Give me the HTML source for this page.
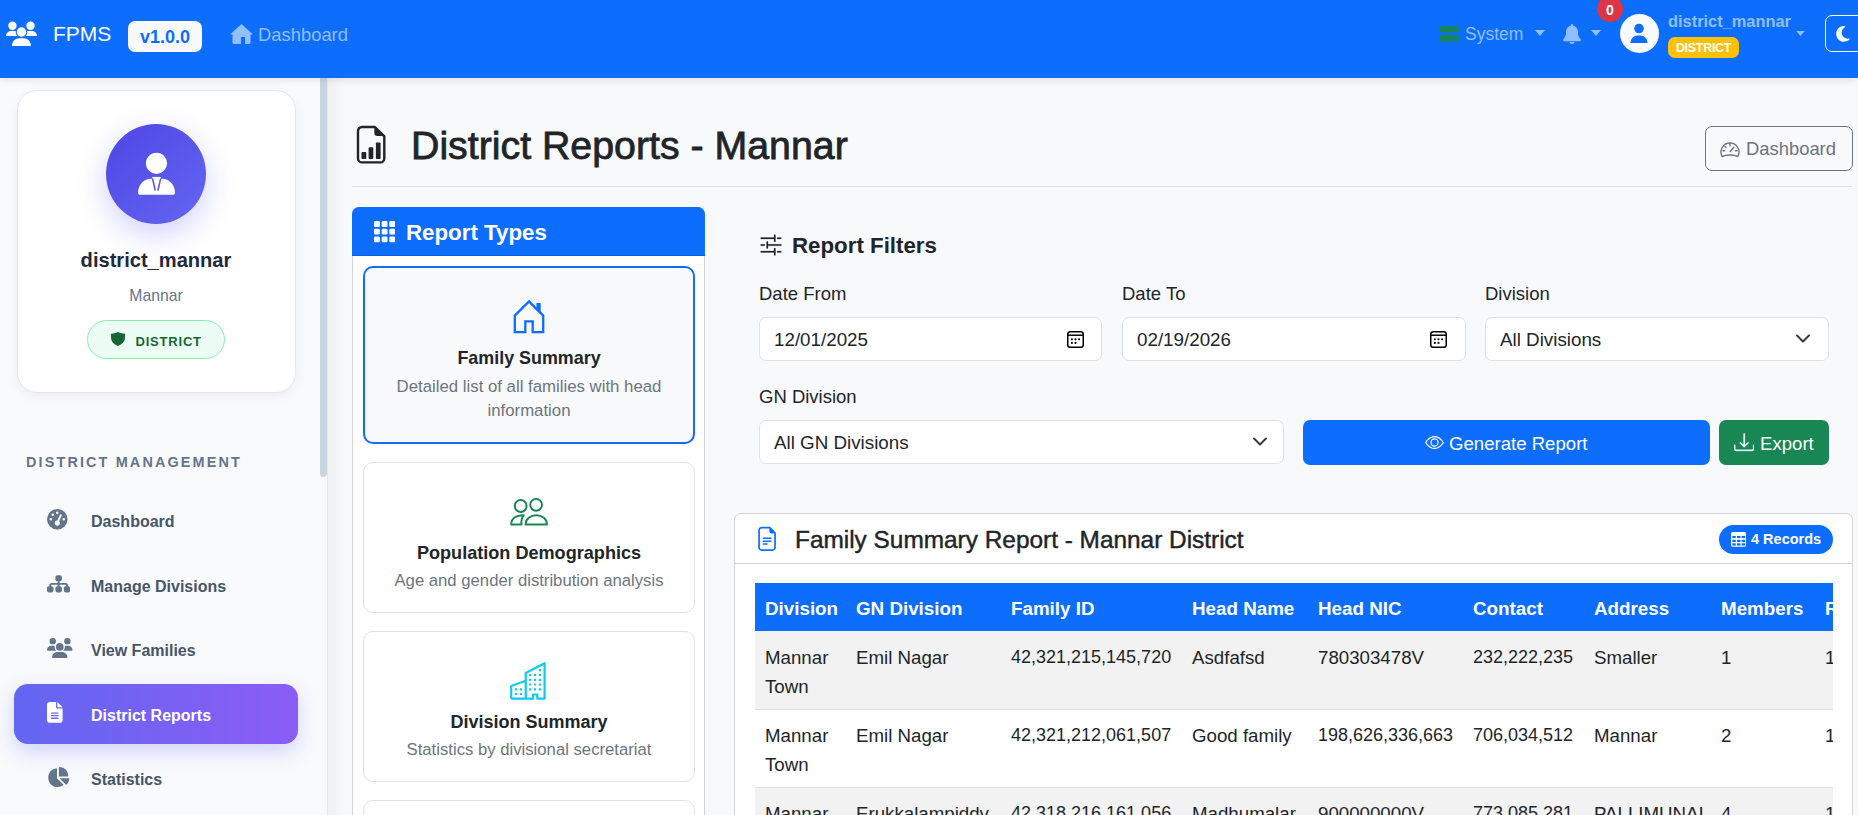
<!DOCTYPE html>
<html><head><meta charset="utf-8">
<style>
*{box-sizing:border-box;margin:0;padding:0}
html,body{width:1858px;height:815px;overflow:hidden}
body{font-family:"Liberation Sans",sans-serif;background:#f8f9fa;position:relative;color:#212529}
.a{position:absolute;white-space:nowrap}
svg{display:block}
/* navbar */
#nav{position:absolute;left:0;top:0;width:1858px;height:78px;background:#0d6efd;z-index:5;box-shadow:0 2px 8px rgba(0,0,0,.1)}
/* sidebar */
#side{position:absolute;left:0;top:78px;width:328px;height:737px;background:#f8fafc;border-right:1px solid #e2e8f0}
#main{position:absolute;left:328px;top:78px;width:1530px;height:737px;background:#f8f9fa}
.card{position:absolute;background:#fff;border:1px solid #e2e8f0}
.lbl{font-size:18.5px;color:#212529;line-height:22px}
.inp{height:44px;background:#fff;border:1px solid #dee2e6;border-radius:7px}
.itx{font-size:18.8px;color:#212529;line-height:22px}
#tb{border-collapse:collapse;table-layout:fixed;width:1110px}
#tb th{background:#0d6efd;color:#fff;font-weight:700;font-size:18.8px;text-align:left;padding:3px 10px 0;height:48px;line-height:22px;white-space:nowrap;overflow:hidden}
#tb td{font-size:18.7px;color:#212529;padding:10.5px 10px 8.5px;line-height:29px;vertical-align:top;border-top:1px solid #dee2e6;white-space:nowrap;overflow:hidden}
#tb tr.st td{background:#f2f2f2}
#tb td.n{font-size:18px}
#tb tbody tr:first-child td{border-top:0;padding-top:12px;padding-bottom:8px}
</style></head><body>

<div id="nav">
  <!-- users icon -->
  <svg class="a" style="left:0;top:15px" width="45" height="35" viewBox="0 15 45 35" fill="#fff">
    <circle cx="12.45" cy="25.7" r="4.2"/><circle cx="30.5" cy="25.7" r="4.2"/>
    <path d="M6 36C6 33 8.3 30.9 11 30.9H20V36z"/><path d="M37 36C37 33 34.7 30.9 32 30.9H23V36z"/>
    <circle cx="21.5" cy="32" r="5.3" stroke="#0d6efd" stroke-width="1.1"/>
    <path d="M12 45.9C12 41.2 15.3 38.2 19.3 38.2H23.6C27.6 38.2 30.9 41.2 30.9 45.9z"/>
  </svg>
  <div class="a" style="left:53px;top:20.5px;font-size:21px;color:#fff;line-height:26px">FPMS</div>
  <div class="a" style="left:128px;top:21px;width:74px;height:31px;background:#f8f9fa;border-radius:7px"></div>
  <div class="a" style="left:140px;top:25px;font-size:18px;font-weight:700;color:#0d6efd;line-height:24px">v1.0.0</div>
  <!-- home -->
  <svg class="a" style="left:230px;top:24px" width="23" height="20" viewBox="0 0 23 20" fill="#92befe">
    <path d="M11.5 0L23 10.5h-2.5V18.5a1.5 1.5 0 0 1-1.5 1.5h-4V13h-4v7H4a1.5 1.5 0 0 1-1.5-1.5V10.5H0z"/>
  </svg>
  <div class="a" style="left:258px;top:23px;font-size:18.4px;color:#92befe;line-height:24px">Dashboard</div>

  <!-- right side -->
  <svg class="a" style="left:1440.2px;top:26px" width="19" height="16" viewBox="0 0 19 16">
    <rect x="0" y="0" width="18.6" height="6.2" rx="1" fill="#198754"/>
    <rect x="0" y="9.1" width="18.6" height="6.5" rx="1" fill="#198754"/>
    <circle cx="12.6" cy="3.1" r=".8" fill="#0d6efd"/><circle cx="15.2" cy="3.1" r=".8" fill="#0d6efd"/>
    <circle cx="12.6" cy="12.5" r=".8" fill="#0d6efd"/><circle cx="15.2" cy="12.5" r=".8" fill="#0d6efd"/>
  </svg>
  <div class="a" style="left:1465px;top:22px;font-size:17.5px;color:#92befe;line-height:24px">System</div>
  <svg class="a" style="left:1535px;top:30px" width="10" height="6" viewBox="0 0 10 6" fill="#92befe"><path d="M0 0h10L5 6z"/></svg>
  <!-- bell -->
  <svg class="a" style="left:1563px;top:24px" width="18" height="20" viewBox="0 0 18 20" fill="#92befe">
    <path d="M9 0c.8 0 1.3.6 1.3 1.3v.5C13.3 2.4 15 5 15 8v1.3c0 2 .7 3.8 2 5.2l.5.6c.4.5.5 1 .2 1.5-.2.4-.6.7-1.1.7H1.4c-.5 0-.9-.3-1.1-.7-.2-.5-.2-1 .2-1.5l.5-.6C2.3 13.1 3 11.3 3 9.3V8c0-3 1.7-5.6 4.7-6.2v-.5C7.7.6 8.2 0 9 0z"/>
    <path d="M6.5 18h5c0 1.3-1.1 2-2.5 2s-2.5-.7-2.5-2z"/>
  </svg>
  <svg class="a" style="left:1591px;top:30px" width="10" height="6" viewBox="0 0 10 6" fill="#92befe"><path d="M0 0h10L5 6z"/></svg>
  <div class="a" style="left:1597px;top:-4px;width:26px;height:26px;border-radius:50%;background:#dc3545"></div>
  <div class="a" style="left:1597px;top:2px;width:26px;text-align:center;font-size:14px;font-weight:700;color:#fff;line-height:16px">0</div>
  <!-- avatar -->
  <div class="a" style="left:1620px;top:14px;width:39px;height:39px;border-radius:50%;background:#f8f9fa"></div>
  <svg class="a" style="left:1629px;top:23px" width="20" height="20" viewBox="0 0 20 20" fill="#0d6efd">
    <circle cx="10" cy="5.5" r="4.8"/><path d="M1.5 20c0-4.5 3.5-7.5 7-7.5h3c3.5 0 7 3 7 7.5z"/>
  </svg>
  <div class="a" style="left:1668px;top:11px;font-size:16.4px;font-weight:700;color:#92befe;line-height:20px">district_mannar</div>
  <div class="a" style="left:1668px;top:37px;width:71px;height:21px;background:#ffc107;border-radius:7px"></div>
  <div class="a" style="left:1668px;top:41px;width:71px;text-align:center;font-size:12.5px;font-weight:700;color:#fff;line-height:15px;letter-spacing:-0.3px">DISTRICT</div>
  <svg class="a" style="left:1796px;top:31px" width="9" height="5" viewBox="0 0 10 6" fill="#92befe"><path d="M0 0h10L5 6z"/></svg>
  <div class="a" style="left:1825px;top:15px;width:50px;height:37px;border:1px solid #fff;border-radius:7px"></div>
  <svg class="a" style="left:1836px;top:24.7px" width="13.7" height="17.8" viewBox="0 0 384 512"><path fill="#f8f9fa" d="M223.5 32C100 32 0 132.3 0 256S100 480 223.5 480c60.6 0 115.5-24.2 155.8-63.4c5-4.9 6.3-12.5 3.1-18.7s-10.1-9.7-17-8.5c-9.8 1.7-19.8 2.6-30.1 2.6c-96.900 0-175.5-78.8-175.5-176c0-65.8 36-123.1 89.3-153.3c6.1-3.5 9.2-10.5 7.7-17.3s-7.3-11.9-14.3-12.5c-6.3-.5-12.6-.8-19-.8z"/></svg>
</div>

<div id="side">
  <div class="a" style="left:16.5px;top:12px;width:279px;height:303px;background:#fff;border:1px solid #e2e8f0;border-radius:20px;box-shadow:0 4px 12px rgba(15,23,42,.05)"></div>
  <div class="a" style="left:106px;top:46px;width:100px;height:100px;border-radius:50%;background:linear-gradient(135deg,#4f46e5,#6366f1);box-shadow:0 10px 30px rgba(99,102,241,.3)"></div>
  <svg class="a" style="left:137px;top:74px" width="40" height="44" viewBox="0 0 40 44">
    <circle cx="19.5" cy="11.3" r="10.6" fill="#fff"/>
    <path d="M1 41C1 32.5 7 26.7 14 26.7H25C32 26.7 38 32.5 38 41Q38 42.7 36.3 42.7H2.7Q1 42.7 1 41Z" fill="#fff"/>
    <path d="M15.3 24.9h8.6v2.2h-8.6z" fill="#fff"/>
    <path d="M15.5 26.5L18.3 38.5M23.7 26.5L20.9 38.5" stroke="#5953e8" stroke-width="1.5"/>
  </svg>
  <div class="a" style="left:0;top:170px;width:312px;text-align:center;font-size:20.1px;font-weight:700;color:#1e293b;line-height:24px">district_mannar</div>
  <div class="a" style="left:0;top:208px;width:312px;text-align:center;font-size:15.75px;color:#64748b;line-height:20px">Mannar</div>
  <div class="a" style="left:87px;top:242px;width:138px;height:39px;border-radius:20px;background:#ecfdf5;border:1px solid #86efac"></div>
  <svg class="a" style="left:110.5px;top:254px" width="14" height="14" viewBox="0 0 14 14" fill="#166534">
    <path d="M7 0C9.5 1 11.5 1.6 14 1.8V5.5C14 9.5 11 12.5 7 14 3 12.5 0 9.5 0 5.5V1.8C2.5 1.6 4.5 1 7 0z"/>
  </svg>
  <div class="a" style="left:135.5px;top:256px;font-size:13px;font-weight:700;color:#166534;line-height:16px;letter-spacing:0.8px">DISTRICT</div>

  <div class="a" style="left:26px;top:376px;font-size:14.4px;font-weight:700;color:#64748b;line-height:16px;letter-spacing:2.15px">DISTRICT MANAGEMENT</div>

  <div class="a" style="left:14px;top:606px;width:284px;height:60px;border-radius:14px;background:linear-gradient(90deg,#6366f1,#8b5cf6);box-shadow:0 8px 20px rgba(99,102,241,.25)"></div>

  <!-- nav icons -->
  <svg class="a" style="left:47.2px;top:431px" width="20.6" height="20.6" viewBox="0 0 512 512"><path fill="#64748b" fill-rule="evenodd" d="M0 256a256 256 0 1 1 512 0A256 256 0 1 1 0 256zM288 96a32 32 0 1 0 -64 0 32 32 0 1 0 64 0zM256 416c35.3 0 64-28.7 64-64c0-17.4-6.9-33.1-18.1-44.6L366 161.7c5.3-12.1-.2-26.3-12.3-31.6s-26.3 .2-31.6 12.3L257.9 288c-.6 0-1.3 0-1.9 0c-35.3 0-64 28.7-64 64s28.7 64 64 64zM176 144a32 32 0 1 0 -64 0 32 32 0 1 0 64 0zM96 288a32 32 0 1 0 0-64 32 32 0 1 0 0 64zm352-32a32 32 0 1 0 -64 0 32 32 0 1 0 64 0z"/></svg>
  <div class="a" style="left:91px;top:434px;font-size:16px;font-weight:700;color:#475569;line-height:20px">Dashboard</div>

  <svg class="a" style="left:46.9px;top:496px" width="23.3" height="19.66" viewBox="0 0 576 512" preserveAspectRatio="none"><path fill="#64748b" d="M208 80c0-26.5 21.5-48 48-48h64c26.5 0 48 21.5 48 48v64c0 26.5-21.5 48-48 48h-8v40H464c30.9 0 56 25.1 56 56v32h8c26.5 0 48 21.5 48 48v64c0 26.5-21.5 48-48 48H464c-26.5 0-48-21.5-48-48V368c0-26.5 21.5-48 48-48h8V288c0-4.4-3.6-8-8-8H312v40h8c26.5 0 48 21.5 48 48v64c0 26.5-21.5 48-48 48H256c-26.5 0-48-21.5-48-48V368c0-26.5 21.5-48 48-48h8V280H112c-4.4 0-8 3.6-8 8v32h8c26.5 0 48 21.5 48 48v64c0 26.5-21.5 48-48 48H48c-26.5 0-48-21.5-48-48V368c0-26.5 21.5-48 48-48h8V288c0-30.9 25.1-56 56-56H264V192h-8c-26.5 0-48-21.5-48-48V80z"/></svg>
  <div class="a" style="left:91px;top:499px;font-size:16px;font-weight:700;color:#475569;line-height:20px">Manage Divisions</div>

  <svg class="a" style="left:47.1px;top:560.1px" width="25.5" height="20.4" viewBox="0 0 640 512"><path fill="#64748b" d="M144 0a80 80 0 1 1 0 160A80 80 0 1 1 144 0zM512 0a80 80 0 1 1 0 160A80 80 0 1 1 512 0zM0 298.7C0 239.8 47.8 192 106.7 192h42.7c15.9 0 31 3.5 44.6 9.7c-1.3 7.2-1.9 14.700-1.9 22.3c0 38.2 16.8 72.5 43.3 96c-.2 0-.4 0-.7 0H21.3C9.6 320 0 310.4 0 298.7zM405.3 320c-.2 0-.4 0-.7 0c26.6-23.5 43.3-57.8 43.3-96c0-7.6-.7-15-1.9-22.3c13.6-6.3 28.7-9.700 44.6-9.7h42.7C592.2 192 640 239.8 640 298.7c0 11.8-9.6 21.3-21.3 21.3H405.3zM224 224a96 96 0 1 1 192 0 96 96 0 1 1 -192 0zM128 485.3C128 411.7 187.7 352 261.3 352H378.7C452.3 352 512 411.7 512 485.300c0 14.7-11.9 26.7-26.7 26.7H154.7c-14.7 0-26.7-11.9-26.7-26.7z"/></svg>
  <div class="a" style="left:91px;top:563px;font-size:16px;font-weight:700;color:#475569;line-height:20px">View Families</div>

  <svg class="a" style="left:47.1px;top:623.9px" width="15.6" height="20.8" viewBox="0 0 384 512"><path fill="#fff" fill-rule="evenodd" d="M64 0C28.7 0 0 28.7 0 64V448c0 35.3 28.7 64 64 64H320c35.3 0 64-28.7 64-64V160H256c-17.7 0-32-14.300-32-32V0H64zM256 0V128H384L256 0zM112 256H272c8.8 0 16 7.2 16 16s-7.2 16-16 16H112c-8.8 0-16-7.2-16-16s7.2-16 16-16zm0 64H272c8.8 0 16 7.2 16 16s-7.2 16-16 16H112c-8.8 0-16-7.2-16-16s7.2-16 16-16zm0 64H272c8.8 0 16 7.2 16 16s-7.2 16-16 16H112c-8.8 0-16-7.2-16-16s7.2-16 16-16z"/></svg>
  <div class="a" style="left:91px;top:628px;font-size:16px;font-weight:700;color:#fff;line-height:20px">District Reports</div>

  <svg class="a" style="left:47.35px;top:689.4px" width="22.5" height="20" viewBox="0 0 576 512"><path fill="#64748b" d="M304 240V16.6c0-9 7-16.6 16-16.6C443.7 0 544 100.3 544 224c0 9-7.600 16-16.6 16H304zM32 272C32 150.7 122.1 50.3 239 34.3c9.2-1.3 17 6.1 17 15.4V288L412.5 444.5c6.7 6.7 6.2 17.7-1.5 23.1C371.8 495.6 323.8 512 272 512C139.5 512 32 404.6 32 272zm526.4 16c9.3 0 16.6 7.8 15.4 17c-7.7 55.9-34.6 105.600-73.9 142.3c-6 5.6-15.4 5.2-21.2-.7L320 288H558.4z"/></svg>
  <div class="a" style="left:91px;top:692px;font-size:16px;font-weight:700;color:#475569;line-height:20px">Statistics</div>

  <div class="a" style="left:320px;top:0;width:7px;height:399px;border-radius:0 0 4px 4px;background:#cbd5e1"></div>
</div>

<div id="main"></div>
<div id="mc">
  <div class="a" style="left:328px;top:78px;width:18px;height:737px;background:linear-gradient(90deg,rgba(0,0,0,.03),rgba(0,0,0,0))"></div>
  <!-- title icon -->
  <svg class="a" style="left:355px;top:125px" width="32" height="40" viewBox="0 0 32 40">
    <path d="M7 2H19.9L29.3 11.4V33.4A4 4 0 0 1 25.3 37.4H7A4 4 0 0 1 3 33.4V6A4 4 0 0 1 7 2Z" fill="none" stroke="#212529" stroke-width="2.4" stroke-linejoin="round"/>
    <path d="M19.3 1V7.9A3 3 0 0 0 22.3 10.9H30.5Z" fill="#212529"/>
    <g fill="#212529"><rect x="6.5" y="27" width="4.8" height="6.9" rx="1"/><rect x="13.6" y="22.3" width="4.7" height="11.6" rx="1"/><rect x="20.9" y="17.5" width="4.7" height="16.4" rx="1"/></g>
  </svg>
  <div class="a" style="left:411px;top:122px;font-size:39.3px;color:#212529;line-height:46px;-webkit-text-stroke:0.8px #212529">District Reports - Mannar</div>
  <div class="a" style="left:352px;top:186px;width:1500px;height:1px;background:#dee2e6"></div>
  <!-- outline dashboard button -->
  <div class="a" style="left:1705px;top:126px;width:148px;height:45px;border:1px solid #6c757d;border-radius:7px"></div>
  <svg class="a" style="left:1720px;top:141px" width="20" height="17" viewBox="0 0 20 17" fill="none" stroke="#6c757d" stroke-width="1.4">
    <path d="M2.2 15.5A9 9 0 1 1 17.8 15.5C16 14.6 13 14 10 14s-6 .6-7.8 1.5z" stroke-linejoin="round"/>
    <path d="M10 3.3v1.6M5 5.5l1 1M3 9.8h1.6M15.4 9.8H17M10.2 10.5l3.6-4.3" stroke-linecap="round"/>
  </svg>
  <div class="a" style="left:1746px;top:138px;font-size:18.4px;color:#6c757d;line-height:22px">Dashboard</div>

  <!-- report types card -->
  <div class="a" style="left:352px;top:207px;width:353px;height:620px;background:#fff;border:1px solid #d3d4d5;border-radius:7px 7px 0 0"></div>
  <div class="a" style="left:352px;top:207px;width:353px;height:49px;background:#0d6efd;border-radius:7px 7px 0 0;border-bottom:1px solid #0b5ed7"></div>
  <svg class="a" style="left:374px;top:221.3px" width="21.2" height="21.4" viewBox="0 0 21 21" fill="#fff">
    <rect x="0" y="0" width="5.8" height="5.8" rx="1.3"/><rect x="7.6" y="0" width="5.8" height="5.8" rx="1.3"/><rect x="15.2" y="0" width="5.8" height="5.8" rx="1.3"/>
    <rect x="0" y="7.6" width="5.8" height="5.8" rx="1.3"/><rect x="7.6" y="7.6" width="5.8" height="5.8" rx="1.3"/><rect x="15.2" y="7.6" width="5.8" height="5.8" rx="1.3"/>
    <rect x="0" y="15.2" width="5.8" height="5.8" rx="1.3"/><rect x="7.6" y="15.2" width="5.8" height="5.8" rx="1.3"/><rect x="15.2" y="15.2" width="5.8" height="5.8" rx="1.3"/>
  </svg>
  <div class="a" style="left:406px;top:220px;font-size:22.3px;font-weight:700;color:#fff;line-height:26px">Report Types</div>

  <div class="a" style="left:363px;top:266px;width:332px;height:177.5px;border:2px solid #0d6efd;border-radius:10px;background:#f8f9fa"></div>
  <svg class="a" style="left:512px;top:300px" width="34" height="35" viewBox="0 0 34 35" fill="none" stroke="#0d6efd" stroke-width="2.3">
    <path d="M2.8 32.2V15.6L17 1.4 31.2 15.6V32.2H20.7V21.4H13.3V32.2Z" stroke-linejoin="miter"/>
    <path d="M24.4 3h4.3v9.5l-4.3-4.3z" fill="#0d6efd" stroke="none"/>
  </svg>
  <div class="a" style="left:363px;top:348px;width:332px;text-align:center;font-size:17.9px;font-weight:700;color:#212529;line-height:20px">Family Summary</div>
  <div class="a" style="left:363px;top:374.5px;width:332px;text-align:center;font-size:16.8px;color:#6c757d;line-height:24.6px;white-space:normal">Detailed list of all families with head<br>information</div>

  <div class="a" style="left:363px;top:462px;width:332px;height:151px;border:1px solid #dee2e6;border-radius:10px;background:#fff"></div>
  <svg class="a" style="left:509px;top:497px" width="40" height="30" viewBox="0 0 40 30" fill="none" stroke="#198754" stroke-width="2">
    <circle cx="11.7" cy="9" r="5.9"/><circle cx="27.1" cy="7.8" r="5.9"/>
    <path d="M16.6 27.6C16.6 21.8 21.5 18.3 27.3 18.3S38 21.8 38 27.6Z" stroke-linejoin="round"/>
    <path d="M12.5 27.6H2.2C2.2 22 6.5 18.3 14.8 18.3 12.6 21 12 24 12.5 27.6Z" stroke-linejoin="round"/>
  </svg>
  <div class="a" style="left:363px;top:543px;width:332px;text-align:center;font-size:18.1px;font-weight:700;color:#212529;line-height:20px">Population Demographics</div>
  <div class="a" style="left:363px;top:571px;width:332px;text-align:center;font-size:16.7px;color:#6c757d;line-height:20px">Age and gender distribution analysis</div>

  <div class="a" style="left:363px;top:631px;width:332px;height:151px;border:1px solid #dee2e6;border-radius:10px;background:#fff"></div>
  <svg class="a" style="left:509px;top:661px" width="38" height="40" viewBox="0 0 38 40" fill="none" stroke="#0dcaf0" stroke-width="2.2">
    <path d="M2.2 37.7V25L16.75 19.8M16.75 37.7V12L35.6 2.2V37.7H28.3V33.5H24V37.7H2.2" stroke-linejoin="round"/>
    <g fill="#0dcaf0" stroke="none"><rect x="20.0" y="12.9" width="2.2" height="2.2" rx=".3"/><rect x="20.0" y="17.7" width="2.2" height="2.2" rx=".3"/><rect x="20.0" y="22.4" width="2.2" height="2.2" rx=".3"/><rect x="20.0" y="27.2" width="2.2" height="2.2" rx=".3"/><rect x="24.9" y="12.9" width="2.2" height="2.2" rx=".3"/><rect x="24.9" y="17.7" width="2.2" height="2.2" rx=".3"/><rect x="24.9" y="22.4" width="2.2" height="2.2" rx=".3"/><rect x="24.9" y="27.2" width="2.2" height="2.2" rx=".3"/><rect x="29.8" y="12.9" width="2.2" height="2.2" rx=".3"/><rect x="29.8" y="17.7" width="2.2" height="2.2" rx=".3"/><rect x="29.8" y="22.4" width="2.2" height="2.2" rx=".3"/><rect x="29.8" y="27.2" width="2.2" height="2.2" rx=".3"/><rect x="29.8" y="8" width="2.2" height="2.2" rx=".3"/><rect x="5.9" y="27.2" width="2.2" height="2.2" rx=".3"/><rect x="5.9" y="31.9" width="2.2" height="2.2" rx=".3"/><rect x="10.8" y="27.2" width="2.2" height="2.2" rx=".3"/><rect x="10.8" y="31.9" width="2.2" height="2.2" rx=".3"/></g>
  </svg>
  <div class="a" style="left:363px;top:712px;width:332px;text-align:center;font-size:18px;font-weight:700;color:#212529;line-height:20px">Division Summary</div>
  <div class="a" style="left:363px;top:740px;width:332px;text-align:center;font-size:16.7px;color:#6c757d;line-height:20px">Statistics by divisional secretariat</div>

  <div class="a" style="left:363px;top:800px;width:332px;height:151px;border:1px solid #dee2e6;border-radius:10px;background:#fff"></div>

  <!-- filters -->
  <svg class="a" style="left:758.5px;top:232.5px" width="24" height="24" viewBox="0 0 16 16" fill="#212529" stroke="#212529" stroke-width="0.15"><path d="M10.5 1a.5.5 0 0 1 .5.5v4a.5.5 0 0 1-1 0V4H1.5a.5.5 0 0 1 0-1H10V1.5a.5.5 0 0 1 .5-.5M12 3.5a.5.5 0 0 1 .5-.5h2a.5.5 0 0 1 0 1h-2a.5.5 0 0 1-.5-.5m-6.5 2A.5.5 0 0 1 6 6v1.5h8.5a.5.5 0 0 1 0 1H6V10a.5.5 0 0 1-1 0V6a.5.5 0 0 1 .5-.5M1 8a.5.5 0 0 1 .5-.5h2a.5.5 0 0 1 0 1h-2A.5.5 0 0 1 1 8m9.5 2a.5.5 0 0 1 .5.5v4a.5.5 0 0 1-1 0V13H1.5a.5.5 0 0 1 0-1H10v-1.5a.5.5 0 0 1 .5-.5m1.5 2.5a.5.5 0 0 1 .5-.5h2a.5.5 0 0 1 0 1h-2a.5.5 0 0 1-.5-.5"/></svg>
  <div class="a" style="left:792px;top:233px;font-size:22.3px;font-weight:700;color:#212529;line-height:26px">Report Filters</div>

  <div class="a lbl" style="left:759px;top:283px">Date From</div>
  <div class="a lbl" style="left:1122px;top:283px">Date To</div>
  <div class="a lbl" style="left:1485px;top:283px">Division</div>
  <div class="a lbl" style="left:759px;top:386px">GN Division</div>

  <div class="a inp" style="left:759px;top:317px;width:343px"></div>
  <div class="a inp" style="left:1122px;top:317px;width:344px"></div>
  <div class="a inp" style="left:1485px;top:317px;width:344px"></div>
  <div class="a inp" style="left:759px;top:420px;width:525px"></div>
  <div class="a itx" style="left:774px;top:329px">12/01/2025</div>
  <div class="a itx" style="left:1137px;top:329px">02/19/2026</div>
  <div class="a itx" style="left:1500px;top:329px">All Divisions</div>
  <div class="a itx" style="left:774px;top:432px">All GN Divisions</div>
  <svg class="a" style="left:1067px;top:331px" width="17" height="17" viewBox="0 0 17 17"><use href="#cal"/></svg>
  <svg class="a" style="left:1430px;top:331px" width="17" height="17" viewBox="0 0 17 17"><use href="#cal"/></svg>
  <svg class="a" style="left:1796px;top:334px" width="14" height="10" viewBox="0 0 14 10"><use href="#chev"/></svg>
  <svg class="a" style="left:1253px;top:437px" width="14" height="10" viewBox="0 0 14 10"><use href="#chev"/></svg>

  <div class="a" style="left:1303px;top:420px;width:407px;height:45px;background:#0d6efd;border-radius:7px"></div>
  <svg class="a" style="left:1425px;top:433.2px" width="19" height="19" viewBox="0 0 16 16" fill="#fff"><path d="M16 8s-3-5.5-8-5.5S0 8 0 8s3 5.5 8 5.5S16 8 16 8M1.173 8a13 13 0 0 1 1.66-2.043C4.12 4.668 5.880 3.5 8 3.5s3.879 1.168 5.168 2.457A13 13 0 0 1 14.828 8q-.086.13-.195.288c-.335.48-.83 1.12-1.465 1.755C11.879 11.332 10.119 12.5 8 12.5s-3.879-1.168-5.168-2.457A13 13 0 0 1 1.172 8z"/><path d="M8 5.5a2.5 2.5 0 1 0 0 5 2.5 2.5 0 0 0 0-5M4.5 8a3.5 3.5 0 1 1 7 0 3.5 3.5 0 0 1-7 0"/></svg>
  <div class="a" style="left:1449px;top:433px;font-size:18.6px;color:#fff;line-height:22px">Generate Report</div>
  <div class="a" style="left:1719px;top:420px;width:110px;height:45px;background:#198754;border-radius:7px"></div>
  <svg class="a" style="left:1734px;top:432px" width="20.4" height="20.4" viewBox="0 0 16 16" fill="#fff" stroke="#fff" stroke-width="0.2"><path d="M.5 9.9a.5.5 0 0 1 .5.5v2.5a1 1 0 0 0 1 1h12a1 1 0 0 0 1-1v-2.5a.5.5 0 0 1 1 0v2.5a2 2 0 0 1-2 2H2a2 2 0 0 1-2-2v-2.5a.5.5 0 0 1 .5-.5"/><path d="M7.646 11.854a.5.5 0 0 0 .708 0l3-3a.5.5 0 0 0-.708-.708L8.5 10.293V1.5a.5.5 0 0 0-1 0v8.793L5.354 8.146a.5.5 0 1 0-.708.708z"/></svg>
  <div class="a" style="left:1760px;top:433px;font-size:18.6px;color:#fff;line-height:22px">Export</div>

  <!-- report card -->
  <div class="a" style="left:734px;top:513px;width:1119px;height:400px;background:#fff;border:1px solid #d3d4d5;border-radius:7px"></div>
  <div class="a" style="left:735px;top:563px;width:1117px;height:1px;background:#d3d4d5"></div>
  <svg class="a" style="left:757px;top:526px" width="20" height="26" viewBox="0 0 20 26" fill="none" stroke="#0d6efd" stroke-width="1.7">
    <path d="M4.5 1.65h8.2l5.35 5.35V21.3a2.75 2.75 0 0 1-2.75 2.75H4.8A2.75 2.75 0 0 1 2.05 21.3V4.4A2.75 2.75 0 0 1 4.8 1.65z" stroke-linejoin="round"/>
    <path d="M12.3 1.2v4.1a2.2 2.2 0 0 0 2.2 2.2h4.1z" fill="#0d6efd" stroke="none"/>
    <path d="M6.3 12.2h7.6M6.3 15.2h7.6M6.3 18.1h3.8" stroke-width="1.5" stroke-linecap="round"/>
  </svg>
  <div class="a" style="left:795px;top:525px;font-size:24.4px;color:#212529;line-height:30px;-webkit-text-stroke:0.45px #212529">Family Summary Report - Mannar District</div>
  <div class="a" style="left:1719px;top:525px;width:114px;height:29px;border-radius:15px;background:#0d6efd"></div>
  <svg class="a" style="left:1731px;top:532.1px" width="15.2" height="14.7" viewBox="0 0 15.2 14.7"><rect x="0" y="0" width="15.2" height="14.7" rx="1.6" fill="#fff"/><rect x="1.3" y="4.0" width="3.5" height="2.1" fill="#0d6efd"/><rect x="1.3" y="7.8" width="3.5" height="2.2" fill="#0d6efd"/><rect x="1.3" y="11.3" width="3.5" height="2.3" fill="#0d6efd"/><rect x="6.0" y="4.0" width="3.5" height="2.1" fill="#0d6efd"/><rect x="6.0" y="7.8" width="3.5" height="2.2" fill="#0d6efd"/><rect x="6.0" y="11.3" width="3.5" height="2.3" fill="#0d6efd"/><rect x="10.7" y="4.0" width="3.5" height="2.1" fill="#0d6efd"/><rect x="10.7" y="7.8" width="3.5" height="2.2" fill="#0d6efd"/><rect x="10.7" y="11.3" width="3.5" height="2.3" fill="#0d6efd"/></svg>
  <div class="a" style="left:1751px;top:531px;font-size:14.5px;font-weight:700;color:#fff;line-height:17px">4 Records</div>

  <div class="a" style="left:755px;top:583px;width:1078px;height:260px;overflow:hidden">
    <table id="tb">
      <colgroup><col style="width:91px"><col style="width:155px"><col style="width:181px"><col style="width:126px"><col style="width:155px"><col style="width:121px"><col style="width:127px"><col style="width:104px"><col style="width:60px"></colgroup>
      <thead><tr><th>Division</th><th>GN Division</th><th>Family ID</th><th>Head Name</th><th>Head NIC</th><th>Contact</th><th>Address</th><th>Members</th><th>Registered</th></tr></thead>
      <tbody>
        <tr class="st"><td>Mannar<br>Town</td><td>Emil Nagar</td><td class="n">42,321,215,145,720</td><td>Asdfafsd</td><td>780303478V</td><td class="n">232,222,235</td><td>Smaller</td><td>1</td><td>1</td></tr>
        <tr><td>Mannar<br>Town</td><td>Emil Nagar</td><td class="n">42,321,212,061,507</td><td>Good family</td><td class="n">198,626,336,663</td><td class="n">706,034,512</td><td>Mannar</td><td>2</td><td>1</td></tr>
        <tr class="st"><td>Mannar<br>Town</td><td>Erukkalampiddy</td><td class="n">42,318,216,161,056</td><td>Madhumalar</td><td>900000000V</td><td class="n">773,085,281</td><td>PALLIMUNAI</td><td>4</td><td>1</td></tr>
      </tbody>
    </table>
  </div>
</div>
<svg width="0" height="0" style="position:absolute">
  <defs>
    <g id="cal" fill="none" stroke="#000" stroke-width="1.5">
      <rect x="0.75" y="0.75" width="15.5" height="15.5" rx="2.6"/>
      <path d="M0.75 4.2h15.5"/>
      <g fill="#000" stroke="none"><circle cx="4.9" cy="8.3" r="1.05"/><circle cx="8.5" cy="8.3" r="1.05"/><circle cx="12.1" cy="8.3" r="1.05"/><circle cx="4.9" cy="11.9" r="1.05"/><circle cx="8.5" cy="11.9" r="1.05"/></g>
    </g>
    <path id="chev" d="M1 1.5l6 6 6-6" fill="none" stroke="#343a40" stroke-width="2" stroke-linecap="round" stroke-linejoin="round"/>
  </defs>
</svg>


</body></html>
